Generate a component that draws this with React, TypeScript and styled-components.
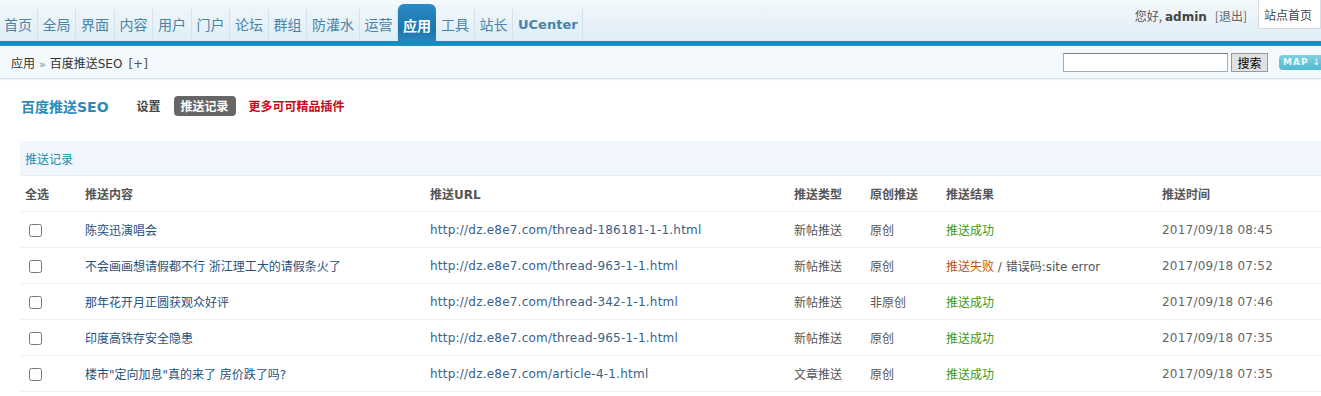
import React from 'react';
import styled, { createGlobalStyle } from 'styled-components';

const GlobalStyle = createGlobalStyle`
    html, body {
        margin: 0;
        padding: 0;
        background: #fff;
        overflow: hidden;
    }
    body {
        font: 12px "DejaVu Sans", "Noto Sans CJK SC", sans-serif;
        color: #333;
    }
`;

const Page = styled.div`
    width: 1321px;
    height: 396px;
    overflow: hidden;
`;

const TopBar = styled.div`
    height: 41px;
    display: flex;
    justify-content: space-between;
    background: linear-gradient(#f3f8fb, #dfeef6);
    border-bottom: 5px solid #168dc1;
`;

const Nav = styled.ul`
    display: flex;
    align-items: flex-end;
    margin: 0;
    padding: 0;
    list-style: none;
`;

const NavItem = styled.li<{ $active?: boolean; $latin?: boolean }>`
    height: ${p => (p.$active ? '37px' : '30px')};
    display: flex;
    align-items: center;
    padding: ${p => (p.$active ? '4px 5px 0' : '0 4.5px 0 5px')};
    margin-bottom: ${p => (p.$active ? '0' : '2px')};
    font: ${p => (p.$latin ? 'bold 13px "DejaVu Sans", sans-serif' : '14px "Noto Sans CJK SC", sans-serif')};
    color: ${p => (p.$active ? '#fff' : '#4a83a7')};
    font-weight: ${p => (p.$active || p.$latin ? 'bold' : 'normal')};
    border-right: ${p => (p.$active ? 'none' : '1px solid #d2e3ee')};
    border-radius: ${p => (p.$active ? '6px 6px 0 0' : '0')};
    background: ${p => (p.$active ? 'linear-gradient(#2a8ac4, #1b76ae 70%, #2b86bd)' : 'none')};
    box-sizing: border-box;
    line-height: 1;
    &:first-child {
        padding-left: 4px;
    }
`;

const UserArea = styled.div`
    display: flex;
    align-items: flex-start;
    gap: 11px;
`;

const Greeting = styled.span`
    margin-top: 7px;
    color: #555;
    font-family: "Noto Sans CJK SC", sans-serif;
    b {
        font-family: "DejaVu Sans", sans-serif;
        color: #444;
        margin-left: 3px;
    }
`;

const Logout = styled.span`
    margin-left: 8px;
    color: #666;
`;

const HomeBox = styled.div`
    height: 29px;
    padding: 0 8px 0 5px;
    background: #fff;
    border: 1px solid #d6dde2;
    border-top: none;
    box-sizing: border-box;
    display: flex;
    align-items: center;
    color: #444;
    font-family: "Noto Sans CJK SC", sans-serif;
`;

const Crumbs = styled.div`
    height: 32px;
    display: flex;
    align-items: center;
    justify-content: space-between;
    padding-left: 11px;
    background: #f3f9fc;
    border-bottom: 1px solid #d5e2ea;
    box-shadow: 0 1px 2px #eef3f6;
`;

const CrumbText = styled.div`
    color: #333;
    span {
        color: #888;
        margin: 0 4px;
        font-size: 11px;
    }
`;

const Plus = styled.span`
    && {
        color: #555;
        margin-left: 6px;
        font-size: 12px;
    }
`;

const SearchArea = styled.div`
    display: flex;
    align-items: center;
    gap: 3px;
    margin-right: -14px;
`;

const SearchInput = styled.input`
    width: 165px;
    height: 19px;
    box-sizing: border-box;
    border: 1px solid #a5acb2;
    border-top-color: #7c8287;
    padding: 0;
    margin: 0;
`;

const SearchButton = styled.button`
    height: 19px;
    width: 37px;
    padding: 0;
    margin: 1px 0 0;
    border: 1px solid #999;
    background: #e1e1e1;
    font: 12px "Noto Sans CJK SC", sans-serif;
    color: #000;
    line-height: 1;
`;

const MapButton = styled.div`
    margin-left: 8px;
    width: 52px;
    height: 15px;
    border-radius: 4px;
    background: linear-gradient(#7fd1e2, #52b9d2);
    color: #e9f8fc;
    font: bold 9px "DejaVu Sans", sans-serif;
    letter-spacing: 1px;
    display: flex;
    align-items: center;
    padding-left: 4px;
`;

const Content = styled.div`
    padding: 16px 0 0 20px;
`;

const PluginNav = styled.div`
    display: flex;
    align-items: center;
    height: 22px;
    font-family: "Noto Sans CJK SC", sans-serif;
`;

const PluginTitle = styled.h3`
    margin: 0 21px 0 1px;
    font: bold 14px "DejaVu Sans", "Noto Sans CJK SC", sans-serif;
    color: #2b8ab9;
`;

const Tab = styled.span<{ $current?: boolean; $hot?: boolean }>`
    height: 20px;
    line-height: 20px;
    padding: 0 7px;
    margin-right: 6px;
    border-radius: 4px;
    font-weight: bold;
    color: ${p => (p.$current ? '#fff' : p.$hot ? '#c8081c' : '#444')};
    background: ${p => (p.$current ? '#666' : 'none')};
`;

const Section = styled.div`
    margin-top: 24px;
`;

const SectionTitle = styled.div`
    height: 34px;
    display: flex;
    align-items: center;
    padding-left: 5px;
    background: #f0f6fc;
    border-bottom: 1px solid #e6eef5;
    color: #1f8ab0;
    font-family: "Noto Sans CJK SC", sans-serif;
`;

const Table = styled.table`
    width: 1330px;
    border-collapse: collapse;
    table-layout: fixed;
`;

const Th = styled.th`
    height: 35px;
    padding: 0 5px;
    text-align: left;
    font: bold 12px "DejaVu Sans", "Noto Sans CJK SC", sans-serif;
    color: #555;
    border-bottom: 1px solid #eef0f2;
`;

const Td = styled.td<{ $tone?: string; $wide?: boolean }>`
    height: 35px;
    padding: 0 5px;
    color: ${p => p.$tone || '#555'};
    letter-spacing: ${p => (p.$wide ? '0.22px' : '0')};
    border-bottom: 1px solid #eef0f2;
    white-space: nowrap;
`;

const Check = styled.input`
    margin: 0 0 0 4px;
    width: 13px;
    height: 13px;
    vertical-align: middle;
`;

const Fail = styled.span`
    color: #c1550c;
`;

const navItems = ['首页', '全局', '界面', '内容', '用户', '门户', '论坛', '群组', '防灌水', '运营', '应用', '工具', '站长', 'UCenter'];

type Record = {
    title: string;
    url: string;
    type: string;
    original: string;
    ok: boolean;
    time: string;
};

const records: Record[] = [
    { title: '陈奕迅演唱会', url: 'http://dz.e8e7.com/thread-186181-1-1.html', type: '新帖推送', original: '原创', ok: true, time: '2017/09/18 08:45' },
    { title: '不会画画想请假都不行 浙江理工大的请假条火了', url: 'http://dz.e8e7.com/thread-963-1-1.html', type: '新帖推送', original: '原创', ok: false, time: '2017/09/18 07:52' },
    { title: '那年花开月正圆获观众好评', url: 'http://dz.e8e7.com/thread-342-1-1.html', type: '新帖推送', original: '非原创', ok: true, time: '2017/09/18 07:46' },
    { title: '印度高铁存安全隐患', url: 'http://dz.e8e7.com/thread-965-1-1.html', type: '新帖推送', original: '原创', ok: true, time: '2017/09/18 07:35' },
    { title: '楼市"定向加息"真的来了 房价跌了吗?', url: 'http://dz.e8e7.com/article-4-1.html', type: '文章推送', original: '原创', ok: true, time: '2017/09/18 07:35' },
];

export default function App() {
    return (
        <Page>
            <GlobalStyle />
            <TopBar>
                <Nav>
                    {navItems.map(item => (
                        <NavItem key={item} $active={item === '应用'} $latin={item === 'UCenter'}>{item}</NavItem>
                    ))}
                </Nav>
                <UserArea>
                    <Greeting>
                        您好,<b>admin</b>
                        <Logout>[退出]</Logout>
                    </Greeting>
                    <HomeBox>站点首页</HomeBox>
                </UserArea>
            </TopBar>
            <Crumbs>
                <CrumbText>
                    应用<span>»</span>百度推送SEO<Plus>[+]</Plus>
                </CrumbText>
                <SearchArea>
                    <SearchInput />
                    <SearchButton>搜索</SearchButton>
                    <MapButton>MAP ↓</MapButton>
                </SearchArea>
            </Crumbs>
            <Content>
                <PluginNav>
                    <PluginTitle>百度推送SEO</PluginTitle>
                    <Tab>设置</Tab>
                    <Tab $current>推送记录</Tab>
                    <Tab $hot>更多可可精品插件</Tab>
                </PluginNav>
                <Section>
                    <SectionTitle>推送记录</SectionTitle>
                    <Table>
                        <colgroup>
                            <col style={{ width: 60 }} />
                            <col style={{ width: 345 }} />
                            <col style={{ width: 364 }} />
                            <col style={{ width: 76 }} />
                            <col style={{ width: 76 }} />
                            <col style={{ width: 216 }} />
                            <col />
                        </colgroup>
                        <thead>
                            <tr>
                                <Th>全选</Th>
                                <Th>推送内容</Th>
                                <Th>推送URL</Th>
                                <Th>推送类型</Th>
                                <Th>原创推送</Th>
                                <Th>推送结果</Th>
                                <Th>推送时间</Th>
                            </tr>
                        </thead>
                        <tbody>
                            {records.map(r => (
                                <tr key={r.url}>
                                    <Td><Check type="checkbox" /></Td>
                                    <Td $tone="#26517d">{r.title}</Td>
                                    <Td $tone="#3a6187" $wide>{r.url}</Td>
                                    <Td>{r.type}</Td>
                                    <Td>{r.original}</Td>
                                    <Td $tone={r.ok ? '#3b9a14' : '#555'}>
                                        {r.ok ? '推送成功' : <><Fail>推送失败</Fail> / 错误码:site error</>}
                                    </Td>
                                    <Td $tone="#666" $wide>{r.time}</Td>
                                </tr>
                            ))}
                        </tbody>
                    </Table>
                </Section>
            </Content>
        </Page>
    );
}
